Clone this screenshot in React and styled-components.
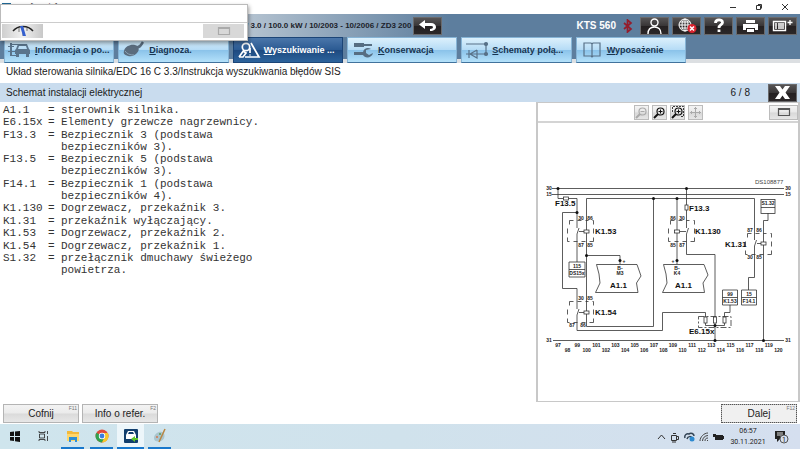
import React from "react";
import styled, { createGlobalStyle, css } from "styled-components";

const GlobalStyle = createGlobalStyle`
  * { box-sizing: border-box; }
  body { margin: 0; background: #fff; color: #1a1a1a; font-family: "Liberation Sans", Arial, sans-serif; }
  button { font-family: inherit; margin: 0; padding: 0; }
`;

const Page = styled.div`
  display: flex;
  flex-direction: column;
  min-height: 100vh;
`;

const TitleBar = styled.div`
  display: flex;
  align-items: center;
  height: 14px;
  padding: 0 2px;
  font-size: 9px;
  line-height: 12px;
  color: #444;
`;

const TitleText = styled.span`
  flex: 1;
  padding-left: 5px;
`;

const WindowButton = styled.button`
  width: 26px;
  height: 12px;
  border: 0;
  background: none;
  display: grid;
  place-items: center;
`;

const Header = styled.header`
  background: linear-gradient(to bottom, #5d7e9e 45px, #dcdfe2 45px);
`;

const VehicleBar = styled.div`
  display: flex;
  align-items: center;
  height: 23px;
  padding: 0 3px 0 246px;
  background: linear-gradient(to right, #c3cfda 0, #b7c5d2 240px, #5d7e9e 450px);
`;

const VehicleText = styled.span`
  font-size: 8px;
  font-weight: bold;
  white-space: nowrap;
  width: 167px;
  color: #1c222a;
`;

const Spacer = styled.div`
  flex: 1;
`;

const Device = styled.span`
  font-size: 10px;
  font-weight: bold;
  color: #fff;
  margin-right: 7px;
`;

const HeaderTools = styled.div`
  display: flex;
  gap: 3px;
  margin-left: 7px;
`;

const DarkButton = styled.button`
  width: 29px;
  height: 18px;
  border: 1px solid #6a6a6c;
  background: linear-gradient(#565455, #393637 48%, #242021 52%, #2b2728);
  display: grid;
  place-items: center;
`;

const Tabs = styled.nav`
  display: grid;
  grid-template-columns: repeat(6, minmax(0, 1fr));
  gap: 4px;
  width: 86%;
  padding: 0 2px 0 4px;
`;

const Tab = styled.button`
  display: flex;
  align-items: center;
  gap: 3px;
  height: 26px;
  padding: 0 0 0 3px;
  border: 1px solid #86b4d6;
  border-bottom-color: #41729c;
  font-size: 9px;
  font-weight: bold;
  white-space: nowrap;
  color: #173450;
  background: linear-gradient(#dcf0fc, #b6dcf6 48%, #8bc3ea 52%, #b4e1fa);
  ${(p) => p.$active && css`
    color: #fff;
    border-color: #1c4577;
    background: linear-gradient(#4a76aa, #2c5b93 48%, #1e4a80 52%, #2c639c);
  `}
`;

const Key = styled.span`
  text-decoration: underline;
`;

const Breadcrumb = styled.div`
  height: 20px;
  padding: 0 6px;
  font-size: 10px;
  line-height: 18px;
`;

const SectionBar = styled.div`
  display: flex;
  align-items: center;
  height: 19px;
  padding: 0 3px 0 6px;
  font-size: 10px;
  background: #c9dcee;
`;

const SectionTitle = styled.h1`
  flex: 1;
  margin: 0;
  font-size: 10px;
  font-weight: normal;
`;

const Counter = styled.span`
  font-size: 10px;
  margin-right: 18px;
`;

const Content = styled.main`
  flex: 1;
  display: grid;
  grid-template-columns: 1fr 264px;
`;

const Legend = styled.dl`
  display: grid;
  grid-template-columns: 45px 13px 200px;
  align-content: space-between;
  height: 172px;
  margin: 2px 3px;
  font-family: "Liberation Mono", "Courier New", monospace;
  font-size: 11px;
  line-height: 12px;
  color: #333;
`;

const Term = styled.dt`
  white-space: nowrap;
`;

const Equals = styled.span``;

const Meaning = styled.dd`
  margin: 0;
`;

const Viewer = styled.section`
  display: flex;
  flex-direction: column;
  border: 1px solid #c8c8c8;
  border-width: 1px 2px 1px 2px;
`;

const ViewerBar = styled.div`
  display: grid;
  grid-template-columns: 1fr auto 1fr;
  align-items: center;
  height: 20px;
  border-bottom: 2px solid #d4d4d4;
`;

const ZoomTools = styled.div`
  grid-column: 2;
  display: flex;
  gap: 3px;
`;

const ToolButton = styled.button`
  width: ${(p) => (p.$wide ? 29 : 15)}px;
  height: 15px;
  border: 1px solid #bcbcbc;
  background: linear-gradient(#f4f4f4, #e8e8e8 48%, #d8d8d8 52%, #e6e6e6);
  display: grid;
  place-items: center;
  justify-self: end;
`;

const Drawing = styled.svg`
  flex: 1;
  width: 100%;
  min-height: 0;
  display: block;
`;

const Footer = styled.footer`
  display: flex;
  gap: 3px;
  padding: 2px 3px 1px;
`;

const FooterButton = styled.button`
  display: grid;
  place-items: center;
  position: relative;
  width: 76px;
  height: 19px;
  border: 1px solid #b4b4b4;
  font-size: 10px;
  color: #222;
  background: linear-gradient(#f3f3f3, #ebebeb 48%, #dadada 52%, #e7e7e7);
  ${(p) => p.$last && css`
    margin-left: auto;
    outline: 1px dotted #555;
    outline-offset: -1px;
    background: #f0f0f0;
  `}
`;

const Hint = styled.span`
  position: absolute;
  top: 0;
  right: 1px;
  font-size: 5px;
  line-height: 6px;
  color: #777;
`;

const Taskbar = styled.div`
  display: flex;
  align-items: stretch;
  height: 25px;
  background: linear-gradient(to right, #cfe5ed, #d0e2ec 50%, #d5dfef);
`;

const Task = styled.button`
  display: grid;
  place-items: center;
  width: ${(p) => (p.$active ? 27 : 23)}px;
  margin: 0 ${(p) => (p.$active ? 1 : 3)}px;
  border: 0;
  background: ${(p) => (p.$active ? "#edf6fa" : "none")};
  border-bottom: 2px solid ${(p) => (p.$open ? "#1878cc" : "transparent")};
`;

const Tray = styled.div`
  display: flex;
  align-items: center;
  gap: 4px;
  margin-left: auto;
  padding-right: 11px;
`;

const Clock = styled.time`
  width: 40px;
  margin-right: 3px;
  text-align: center;
  font-family: Roboto, sans-serif;
  font-size: 7px;
  line-height: 11px;
  color: #222;
`;

const FloatingPanel = styled.aside`
  position: absolute;
  top: 4px;
  left: 0;
  width: 248px;
  height: 37px;
  display: flex;
  flex-direction: column;
  justify-content: flex-end;
  background: #fff;
  border: 1px solid #bbb;
  box-shadow: 1px 2px 4px rgba(0, 0, 0, 0.4);
`;

const PanelRow = styled.div`
  display: flex;
  justify-content: space-between;
  padding: 1px 3px 2px 1px;
  border-top: 1px solid #ccc;
`;

const PanelButton = styled.button`
  width: 41px;
  height: 14px;
  border: 0;
  display: grid;
  place-items: center;
  background: ${(p) => (p.$flat ? "#d8d8d8" : "linear-gradient(to right, #cfcfcf, #f0f0f0 50%, #c8c8c8)")};
`;

/* ---- icons ---- */

const CarInfoIcon = () => (
  <svg width="24" height="18" viewBox="0 0 24 18" fill="#5a748c">
    <path d="M8 8l2-5h9l2 5 1 1v4H7V9zm3-3-1 3h9l-1-3z" fillRule="evenodd" />
    <path d="M8 13h3v3H8zm10 0h3v3h-3z" />
    <path d="M2 2h2v12H2zM0 5h6v1H0zm0 5h7v1H0zm2 4h6v1H2zM3 3h8v1H3z" />
  </svg>
);
const PlugIcon = () => (
  <svg width="24" height="18" viewBox="0 0 24 18" fill="#5a6c7e">
    <path d="M2 10C3 5 9 3 13 4c4 1 5 5 2 8-2 2-5 4-9 3-3-1-5-2-4-5z" />
    <path d="M14 6c4 1 5-2 7-5" fill="none" stroke="#5a6c7e" strokeWidth="2.5" />
    <path d="M3 10c2 3 5 4 9 4" fill="none" stroke="#8ba4b8" />
  </svg>
);
const FaultIcon = () => (
  <svg width="24" height="18" viewBox="0 0 24 18" fill="none" stroke="#fff" strokeWidth="1.7">
    <circle cx="9" cy="6" r="3.7" />
    <path d="M7 9l-5 7M8 16h14L14 2M6 10l3 2-3 4H2" />
    <path d="M13 7v5M13 13.500v1" />
  </svg>
);
const ToolsIcon = () => (
  <svg width="24" height="18" viewBox="0 0 24 18" fill="#566d82">
    <path d="M3 2h10v1h8v2h-8v1H3z" />
    <path d="M3 11h9c1-4 5-5 8-3l-5 1v3l3 2 4-2c-1 5-8 6-10 2H3z" />
  </svg>
);
const SchematicIcon = () => (
  <svg width="24" height="18" viewBox="0 0 24 18" fill="none" stroke="#587188" strokeWidth="1.2">
    <path d="M1 3h20M21 3v10H1M12 9v8L5 13l7-4M4 9v8" />
    <circle cx="21" cy="3" r="1.500" fill="#587188" />
    <circle cx="21" cy="13" r="1.500" fill="#587188" />
  </svg>
);
const BookIcon = () => (
  <svg width="24" height="18" viewBox="0 0 24 18" fill="none" stroke="#587188" strokeWidth="1.2">
    <path d="M4 2h7l1 1 1-1h7v13h-7l-1 1-1-1H4zM12 3v13" />
  </svg>
);
const BackIcon = () => (
  <svg width="19" height="12" viewBox="0 0 19 12" fill="#fff">
    <path d="M1 4.500 7 0v3h6c3 0 5 2 5 4s-2 4-6 4v-2c2 0 3-1 3-2s-1-1-3-1H7v3z" />
  </svg>
);
const BluetoothIcon = () => (
  <svg width="10" height="14" viewBox="0 0 10 14" fill="none" stroke="#941c2c" strokeWidth="1.7">
    <path d="M1 4l7 6-3.500 3V1L8 4 1 10" />
  </svg>
);
const UserIcon = () => (
  <svg width="17" height="16" viewBox="0 0 17 16" fill="none" stroke="#fff" strokeWidth="1.400">
    <circle cx="8.500" cy="4.500" r="3.500" />
    <path d="M2 16c0-5 3-7 6.500-7S15 11 15 16" />
  </svg>
);
const GlobeIcon = () => (
  <svg width="22" height="16" viewBox="0 0 22 16" fill="none" stroke="#fff">
    <circle cx="9" cy="7" r="6" />
    <path d="M3 7h12M9 1v12M4 4h10M4 10h10" />
    <ellipse cx="9" cy="7" rx="3" ry="6" />
    <circle cx="16" cy="10.500" r="4.500" fill="#d9222e" stroke="none" />
    <path d="M14 8.500l4 4M18 8.500l-4 4" strokeWidth="1.500" />
  </svg>
);
const HelpIcon = () => (
  <svg width="12" height="15" viewBox="0 0 12 15" fill="none" stroke="#fff" strokeWidth="2.800">
    <path d="M2.500 5C2.500 1 9.500 1 9.500 4.500 9.500 7 6 6.500 6 10M6 11.500v2.500" />
  </svg>
);
const PrintIcon = () => (
  <svg width="17" height="14" viewBox="0 0 17 14" fill="#fff">
    <path d="M4 1h9v3H4zM1 5h15v6h-3V9H4v2H1zM5 10h7v3H5z" />
  </svg>
);
const ListIcon = () => (
  <svg width="21" height="14" viewBox="0 0 21 14" fill="none" stroke="#fff">
    <path d="M1.500 2.500h12v9h-12z" strokeWidth="1.400" />
    <path d="M3 5h2M6 5h6M3 7h2M6 7h6M3 9h2M6 9h6M18 1v5M15.500 3.500h5" strokeWidth="1.300" />
  </svg>
);
const CloseIcon = () => (
  <svg width="17" height="13" viewBox="0 0 17 13" fill="#fff">
    <path d="M1 0h5l2.500 3.500L11 0h5l-4.500 6.500L16 13h-5L8.500 9.500 6 13H1l4.500-6.500z" />
  </svg>
);
const GaugeIcon = () => (
  <svg width="22" height="12" viewBox="0 0 22 12" fill="none">
    <path d="M1 6C6 0 16 0 21 6" stroke="#222" strokeWidth="1.500" />
    <path d="M11 2v9M7 3v4M15 3v3" stroke="#777" />
    <path d="M8 1h3l3 10h-3z" fill="#3560d0" />
  </svg>
);
const WindowIcon = ({ color = "#555" }) => (
  <svg width="14" height="10" viewBox="0 0 14 10" fill="none" stroke={color}>
    <path d="M1.500 1.500h11v7h-11zM1 2.500h12" strokeWidth="1.200" />
  </svg>
);
const LensIcon = ({ color, plus, frame }) => (
  <svg width="13" height="13" viewBox="0 0 13 13" fill="none" stroke={color}>
    <circle cx="7.500" cy="5.500" r="3.500" strokeWidth="1.200" />
    <path d="M5 8l-4 4" strokeWidth="2" />
    <path d={plus ? "M5.500 5.500h4M7.500 3.500v4" : "M5.500 5.500h4"} />
    {frame && <path d="M1.500 6V.5h11v10h-3" strokeDasharray="2 1" strokeWidth="0.8" />}
  </svg>
);
const MoveIcon = () => (
  <svg width="13" height="13" viewBox="0 0 13 13" fill="none" stroke="#aaa">
    <path d="M6.500 1v11M1 6.500h11M5 2.500h3M5 10.500h3M2.500 5v3M10.500 5v3" />
  </svg>
);

const TASKS = [
  { name: "Start", art: <path d="M3 4l4-.5V8H3zm5-.6L13 3v5H8zM3 9h4v4l-4-.5zm5 0h5v5l-5-.7z" fill="#111" /> },
  { name: "Widok zadań", art: <path d="M3 3v1.500h6V3M3 13v-1.500h6V13M3.500 6h5v4h-5zM11.500 3v3M11.500 8v5" fill="none" stroke="#222" strokeWidth="0.8" /> },
  {
    name: "Eksplorator plików", open: true,
    art: <><path d="M2 3h5l1 1h6v9H2z" fill="#f3b93c" /><path d="M2 6h12v7H2z" fill="#ffd76b" /><path d="M4 9h8v5h-2v-2H6v2H4z" fill="#2d8fd5" /></>,
  },
  {
    name: "Chrome", open: true,
    art: <><circle cx="8" cy="8" r="6.500" fill="#e04a3a" /><path d="M8 8 2.400 4.800A6.500 6.500 0 0 0 8 14.500l3-5z" fill="#31a350" /><path d="M8 8h3l-3 6.500A6.500 6.500 0 0 0 13.800 5H8z" fill="#f8c72d" /><circle cx="8" cy="8" r="3.200" fill="#fff" /><circle cx="8" cy="8" r="2.400" fill="#3b7de0" /></>,
  },
  {
    name: "ESI[tronic]", open: true, active: true,
    art: <><rect x="1" y="1" width="14" height="14" rx="1" fill="#123f6e" /><path d="M3 7l2-4h6l2 4v4H3zm2-1h6l-1-2H6z" fill="#fff" fillRule="evenodd" /><path d="M8 11l4-3v2h3v2h-3v2z" fill="#5fc62b" /></>,
  },
  {
    name: "Paint", open: true,
    art: <><path d="M2 10c0-4 5-7 8-6 4 1 3 8-1 9-3 1-7 1-7-3z" fill="#a9c5ce" /><circle cx="5" cy="9" r="1" fill="#d7754d" /><circle cx="8" cy="6" r="1" fill="#5c9c55" /><path d="M13 1 7 14" stroke="#b98541" strokeWidth="1.500" /></>,
  },
];

const TABS = [
  { label: "Informacja o po...", Icon: CarInfoIcon },
  { label: "Diagnoza.", Icon: PlugIcon },
  { label: "Wyszukiwanie ...", Icon: FaultIcon, active: true },
  { label: "Konserwacja", Icon: ToolsIcon },
  { label: "Schematy połą...", Icon: SchematicIcon },
  { label: "Wyposażenie", Icon: BookIcon },
];

const LEGEND = [
  ["A1.1", "sterownik silnika."],
  ["E6.15x", "Elementy grzewcze nagrzewnicy."],
  ["F13.3", "Bezpiecznik 3 (podstawa bezpieczników 3)."],
  ["F13.5", "Bezpiecznik 5 (podstawa bezpieczników 3)."],
  ["F14.1", "Bezpiecznik 1 (podstawa bezpieczników 4)."],
  ["K1.130", "Dogrzewacz, przekaźnik 3."],
  ["K1.31", "przekaźnik wyłączający."],
  ["K1.53", "Dogrzewacz, przekaźnik 2."],
  ["K1.54", "Dogrzewacz, przekaźnik 1."],
  ["S1.32", "przełącznik dmuchawy świeżego powietrza."],
];

/* ---- wiring diagram ---- */

const WIRES = [
  "M552 188.500H784M552 194.500H784M553 340.500H784",
  "M558 188V198.500H577V228M577 212.500H562.500V288.500H577V309",
  "M577 234V262M577 315V330.500H662.500V312.500H705.500V317",
  "M586.500 198.500V326.500H653.500V198.500M586.500 198.500H754.500V240M586.500 255.500H620V264",
  "M677 198.500V264M686.500 188V228M686.500 234V254.500H715V340",
  "M754.500 246V277.500H748.500V290M768 213V220.500H763.500V340",
  "M730 304V312.500H724.500V317M705.500 323V325.500H724.500V323",
  "M577 234L579 228M686.500 234L688.500 228M754.500 246L756.500 240M577 315L579 309",
  "M579 231.500H584M680 231.500H686M757 243.500H761M579 312.500H584",
];
const DOTS = [[558, 188.5], [686.5, 188.5], [577, 212.5], [586.5, 255.5], [653.5, 198.5], [677, 198.5], [677, 260.5], [715, 325.5], [715, 340.5], [763.5, 340.5], [620, 260.5]];
const RELAYS = [[569.5, 220.5], [569.5, 301.5], [670.5, 220.5], [747.5, 233.5]];
const COILS = [[584, 230], [584, 311], [674.5, 230], [761, 242]];
const NAMES = [
  ["F13.5", 555, 206], ["K1.53", 595, 234], ["K1.54", 595, 315], ["F13.3", 689, 211], ["K1.130", 695, 234],
  ["K1.31", 725, 247], ["E6.15x", 689, 334], ["A1.1", 610, 288], ["A1.1", 675, 288],
];
const PINS = [
  ["30", 549, 190], ["15", 549, 196], ["30", 788, 190], ["15", 788, 196], ["31", 549, 342], ["31", 788, 342],
  ["30", 581, 220], ["86", 590, 220], ["87", 581, 247], ["85", 590, 247],
  ["30", 581, 300], ["85", 590, 300], ["87", 572, 327], ["86", 583, 327],
  ["86", 673, 220], ["30", 682, 220], ["85", 673, 247], ["87", 682, 247],
  ["87", 750, 232], ["86", 759, 232], ["30", 750, 259], ["85", 759, 259],
  ["B-", 620, 270], ["M3", 620, 275], ["B-", 677, 270], ["K4", 677, 275], ["+", 624, 263], ["+", 673, 263],
];
const PAIRS = [["115", "DS15x", 569, 262, 16], ["99", "K1.53", 722.5, 290, 15], ["15", "F14.1", 741.5, 290, 15]];
const TRACKS = Array.from({ length: 24 }, (_, i) => 97 + i);

const WiringDiagram = () => (
  <Drawing viewBox="538 123 260 278" role="img" aria-label="Schemat DS108877" fontFamily="Liberation Sans, Arial, sans-serif">
    <g fill="none" stroke="#333" strokeWidth="0.8">
      {WIRES.map((d) => <path key={d} d={d} />)}
      <path d="M596.500 264.500H637L641 276 636.500 283 638 292.500H595.500L600 283 599 274Z" />
      <path d="M663.500 264.500H704L708 275 703 283 704.500 292.500H662.500L667 283 666 274Z" />
      {RELAYS.map(([x, y]) => (
        <path key={`${x}-${y}`} d={`M${x} ${y + 4}v-4h4m4 0h4m4 0h3m4 0h1v4m0 4v5m0 4v4h-4m-4 0h-4m-4 0h-4m-4 0h-2v-4m0-4v-5`} />
      ))}
      <path d="M698.500 316.500H731V327.500H698.500Z" strokeDasharray="6 2 2 2" />
      <rect x="761" y="199.500" width="14" height="14" />
      <path d="M761 207.500h14" />
    </g>
    <g fill="#fff" stroke="#333" strokeWidth="0.8">
      {COILS.map(([x, y]) => <rect key={`${x}-${y}`} x={x} y={y} width="5" height="3" />)}
      <rect x="563.500" y="197" width="5" height="3" />
      <rect x="685" y="205" width="3" height="5" />
      {[705.5, 715, 724.5].map((x) => <rect key={x} x={x - 1.5} y="317" width="3" height="6" />)}
      {PAIRS.map(([, , x, y, w]) => <path key={x} d={`M${x} ${y}h${w}v15h-${w}zM${x} ${y + 7.5}h${w}`} />)}
    </g>
    <g fill="#111">
      {DOTS.map(([x, y]) => <circle key={`${x}-${y}`} cx={x} cy={y} r="1.500" />)}
    </g>
    <g fill="#111" fontWeight="bold" fontSize="8">
      {NAMES.map(([t, x, y]) => <text key={`${x}-${y}`} x={x} y={y}>{t}</text>)}
    </g>
    <g fill="#222" fontWeight="bold" fontSize="5" textAnchor="middle">
      {PINS.map(([t, x, y]) => <text key={`${x}-${y}`} x={x} y={y}>{t}</text>)}
      {PAIRS.map(([a, b, x, y, w]) => (
        <React.Fragment key={x}>
          <text x={x + w / 2} y={y + 6}>{a}</text>
          <text x={x + w / 2} y={y + 13}>{b}</text>
        </React.Fragment>
      ))}
      <text x="768" y="205">S1.32</text>
      {TRACKS.map((n, i) => <text key={n} x={558 + i * 9.58} y={i % 2 ? 352 : 347}>{n}</text>)}
    </g>
    <text x="755" y="184" fontSize="6" fill="#444">DS108877</text>
  </Drawing>
);

export default function App() {
  return (
    <Page>
      <GlobalStyle />
      <TitleBar>
        <svg width="9" height="9" viewBox="0 0 9 9"><rect width="9" height="9" fill="#206a98" /><path d="M1 3h7v3H1z" fill="#b5d8e8" /></svg>
        <TitleText>ESI[tronic] 2.0</TitleText>
        <WindowButton aria-label="Minimalizuj"><svg width="8" height="8"><path d="M1 4.500h6" stroke="#333" /></svg></WindowButton>
        <WindowButton aria-label="Przywróć"><svg width="8" height="8" fill="none" stroke="#333"><path d="M1.500 2.500h4v4h-4zM3 1.500h3.500v4" /></svg></WindowButton>
        <WindowButton aria-label="Zamknij"><svg width="8" height="8"><path d="M1 1l6 6M7 1l-6 6" stroke="#333" /></svg></WindowButton>
      </TitleBar>
      <Header>
        <VehicleBar>
          <VehicleText>/ 3.0 / 100.0 kW / 10/2003 - 10/2006 / ZD3 200</VehicleText>
          <DarkButton aria-label="Wstecz"><BackIcon /></DarkButton>
          <Spacer />
          <Device>KTS 560</Device>
          <BluetoothIcon />
          <HeaderTools>
            <DarkButton aria-label="Użytkownik"><UserIcon /></DarkButton>
            <DarkButton aria-label="Sieć"><GlobeIcon /></DarkButton>
            <DarkButton aria-label="Pomoc"><HelpIcon /></DarkButton>
            <DarkButton aria-label="Drukuj"><PrintIcon /></DarkButton>
            <DarkButton aria-label="Lista"><ListIcon /></DarkButton>
          </HeaderTools>
        </VehicleBar>
        <Tabs>
          {TABS.map(({ label, Icon, active }) => (
            <Tab key={label} $active={active} aria-current={active ? "page" : undefined}>
              <Icon />
              <span><Key>{label[0]}</Key>{label.slice(1)}</span>
            </Tab>
          ))}
        </Tabs>
      </Header>
      <Breadcrumb>Układ sterowania silnika/EDC 16 C 3.3/Instrukcja wyszukiwania błędów SIS</Breadcrumb>
      <SectionBar>
        <SectionTitle>Schemat instalacji elektrycznej</SectionTitle>
        <Counter>6 / 8</Counter>
        <DarkButton aria-label="Zamknij schemat"><CloseIcon /></DarkButton>
      </SectionBar>
      <Content>
        <Legend>
          {LEGEND.map(([code, text]) => (
            <React.Fragment key={code}>
              <Term>{code}</Term>
              <Equals>=</Equals>
              <Meaning>{text}</Meaning>
            </React.Fragment>
          ))}
        </Legend>
        <Viewer>
          <ViewerBar>
            <ZoomTools>
              <ToolButton aria-label="Pomniejsz" disabled><LensIcon color="#aaa" /></ToolButton>
              <ToolButton aria-label="Powiększ"><LensIcon color="#111" plus /></ToolButton>
              <ToolButton aria-label="Powiększ obszar"><LensIcon color="#111" plus frame /></ToolButton>
              <ToolButton aria-label="Przesuń" disabled><MoveIcon /></ToolButton>
            </ZoomTools>
            <ToolButton $wide aria-label="Pełny ekran"><WindowIcon /></ToolButton>
          </ViewerBar>
          <WiringDiagram />
        </Viewer>
      </Content>
      <Footer>
        <FooterButton>Cofnij<Hint>F11</Hint></FooterButton>
        <FooterButton>Info o refer.<Hint>F2</Hint></FooterButton>
        <FooterButton $last>Dalej<Hint>F12</Hint></FooterButton>
      </Footer>
      <Taskbar>
        {TASKS.map(({ name, art, open, active }) => (
          <Task key={name} $open={open} $active={active} aria-label={name}>
            <svg width="16" height="16" viewBox="0 0 16 16">{art}</svg>
          </Task>
        ))}
        <Tray>
          <svg width="9" height="10" fill="none" stroke="#333"><path d="M1 7l3.500-4L8 7" /></svg>
          <svg width="10" height="12" fill="none" stroke="#333"><path d="M1.500 4.500h5v5h-5zM6.500 5.500h2v3h-2M3 2.500h3M2 11h4" /></svg>
          <svg width="11" height="11" fill="none"><path d="M1 7C0 4 3 2 5 3c2-2 5 0 5 2M3 8c1-3 4-3 5-1" stroke="#345" strokeWidth="1.500" /><circle cx="8" cy="8" r="2.500" fill="#2d8ad0" /></svg>
          <svg width="10" height="10" fill="none" stroke="#444"><path d="M1 9c0-4 4-8 8-8M3.500 9c0-3 2.500-5.500 5.500-5.500M6 9c0-2 1-3 3-3M8.500 8v1" /></svg>
          <svg width="11" height="10" fill="#222"><path d="M2 3h8v5H2zM0 2h3v3H0zM10 4h1v3h-1z" /></svg>
          <Clock>06:57<br />30.11.2021</Clock>
          <svg width="14" height="14" viewBox="0 0 14 14"><path d="M0 1h10v8H5l-3 3V9H0z" fill="#222" /><path d="M2 3h6M2 5h6" stroke="#ddd" /><circle cx="9" cy="9" r="4" fill="#d5dfef" stroke="#555" /><text x="7" y="12" fontSize="7" fontFamily="Roboto, sans-serif" fill="#222">1</text></svg>
        </Tray>
      </Taskbar>
      <FloatingPanel>
        <PanelRow>
          <PanelButton aria-label="Miernik"><GaugeIcon /></PanelButton>
          <PanelButton $flat aria-label="Okno"><WindowIcon color="#aaa" /></PanelButton>
        </PanelRow>
      </FloatingPanel>
    </Page>
  );
}
